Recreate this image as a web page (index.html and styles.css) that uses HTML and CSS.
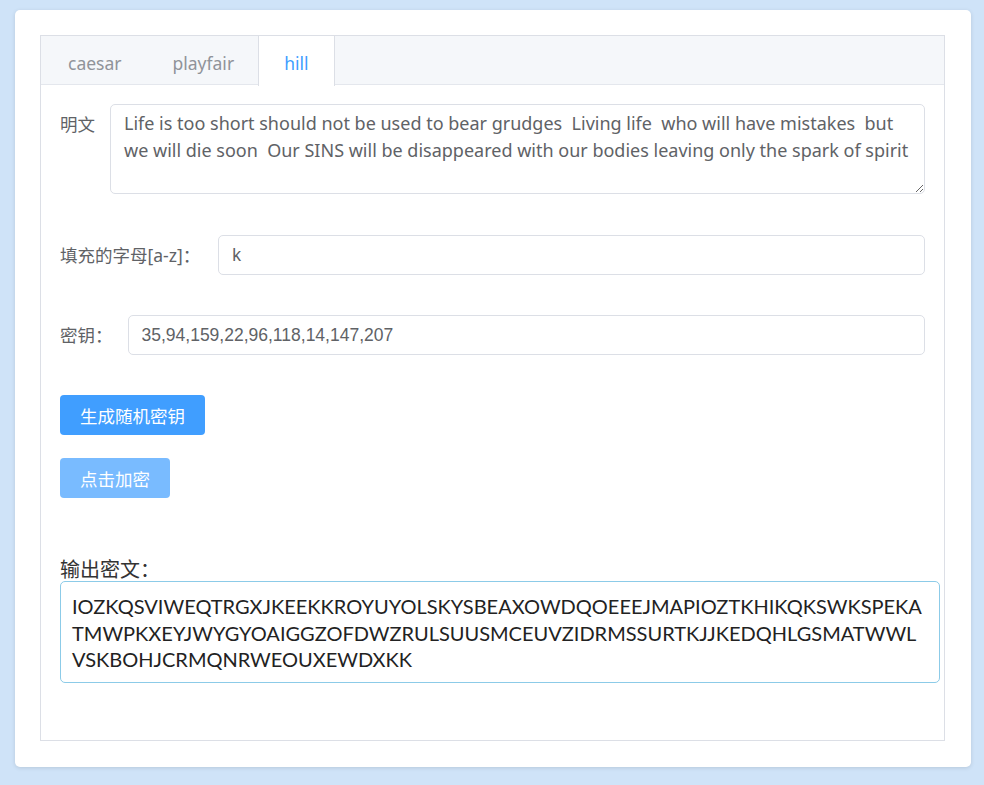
FILE: index.html
```html
<!DOCTYPE html>
<html>
<head>
<meta charset="utf-8">
<link rel="stylesheet" href="styles.css">
</head>
<body>
<div class="card">
  <div class="tabs">
    <div class="tab-header">
      <div class="tab">caesar</div>
      <div class="tab">playfair</div>
      <div class="tab active">hill</div>
    </div>
    <div class="tab-body">
      <div class="form-item first">
        <label class="label">明文</label>
        <div class="control">
          <textarea class="textarea">Life is too short should not be used to bear grudges  Living life  who will have mistakes  but we will die soon  Our SINS will be disappeared with our bodies leaving only the spark of spirit</textarea>
        </div>
      </div>
      <div class="form-item second">
        <label class="label wide">填充的字母[a-z]：</label>
        <div class="control">
          <input class="input" value="k">
        </div>
      </div>
      <div class="form-item">
        <label class="label">密钥：</label>
        <div class="control">
          <input class="input" value="35,94,159,22,96,118,14,147,207">
        </div>
      </div>
      <div class="buttons">
        <button class="btn primary">生成随机密钥</button>
        <button class="btn disabled">点击加密</button>
      </div>
      <div class="output-label">输出密文：</div>
      <div class="output">IOZKQSVIWEQTRGXJKEEKKROYUYOLSKYSBEAXOWDQOEEEJMAPIOZTKHIKQKSWKSPEKATMWPKXEYJWYGYOAIGGZOFDWZRULSUUSMCEUVZIDRMSSURTKJJKEDQHLGSMATWWLVSKBOHJCRMQNRWEOUXEWDXKK</div>
    </div>
  </div>
</div>
</body>
</html>
```

FILE: styles.css
```css
* { box-sizing: border-box; }
html, body {
  margin: 0;
  padding: 0;
  height: 100%;
}
body {
  background: #cfe3f8;
  font-family: "Noto Sans", "Noto Sans CJK SC", sans-serif;
  padding: 10px 13px 18px 15px;
}
.card {
  background: #fff;
  border-radius: 5px;
  box-shadow: 0 1px 4px rgba(0, 0, 0, 0.12);
  height: 757px;
  width: 956px;
  padding: 25px 25px 26px 25px;
}
.tabs {
  border: 1px solid #dcdfe6;
  height: 706px;
  width: 905px;
}
.tab-header {
  display: flex;
  background: #f5f7fa;
  border-bottom: 1px solid #e4e7ed;
  height: 49px;
}
.tab {
  height: 49px;
  line-height: 49px;
  padding-top: 3px;
  font-size: 17.5px;
  color: #909399;
  padding-left: 25px;
  padding-right: 25px;
  border-left: 1px solid transparent;
  border-right: 1px solid transparent;
}
.tab:first-child {
  padding-left: 26px;
  padding-right: 24px;
}
.tab.active {
  background: #fff;
  color: #409eff;
  border-left-color: #dcdfe6;
  border-right-color: #dcdfe6;
  height: 50px;
  margin-left: -2px;
}
.tab-body {
  padding: 19px 19px 0 19px;
}
.form-item {
  display: flex;
  margin-top: 40px;
}
.form-item.first { margin-top: 0; }
.form-item.second { margin-top: 41px; }
.label {
  font-size: 17.5px;
  color: #606266;
  line-height: 40px;
  padding-right: 15px;
  white-space: nowrap;
}
.label.wide { padding-right: 18px; }
.control { flex: 1; }
.textarea {
  display: block;
  width: 100%;
  height: 90px;
  border: 1px solid #dcdfe6;
  border-radius: 5px;
  padding: 5px 13px;
  font-family: "Noto Sans", "Noto Sans CJK SC", sans-serif;
  font-size: 18px;
  line-height: 27px;
  color: #606266;
  resize: vertical;
  outline: none;
}
.input {
  display: block;
  width: 100%;
  height: 40px;
  border: 1px solid #dcdfe6;
  border-radius: 5px;
  padding: 0 13px;
  font-family: "Liberation Sans", "Noto Sans CJK SC", sans-serif;
  font-size: 17.5px;
  color: #606266;
  outline: none;
}
.buttons {
  display: flex;
  flex-direction: column;
  align-items: flex-start;
  gap: 23px;
  margin-top: 40px;
}
.btn {
  height: 40px;
  border: none;
  border-radius: 4px;
  padding: 0 20px;
  font-family: "Noto Sans CJK SC", sans-serif;
  font-size: 17.5px;
  color: #fff;
}
.btn.primary { background: #409eff; }
.btn.disabled { background: #79bbff; }
.output-label {
  margin-top: 59px;
  font-family: "Noto Sans CJK SC", sans-serif;
  font-size: 20px;
  line-height: 24px;
  color: #333;
}
.output {
  width: 880px;
  min-height: 101px;
  border: 1px solid #8ccbe8;
  border-radius: 5px;
  padding: 11px 11px 9px 11px;
  font-family: "Lato", "Noto Sans", sans-serif;
  font-size: 20px;
  line-height: 26.5px;
  color: #222;
  word-break: break-all;
}
```
